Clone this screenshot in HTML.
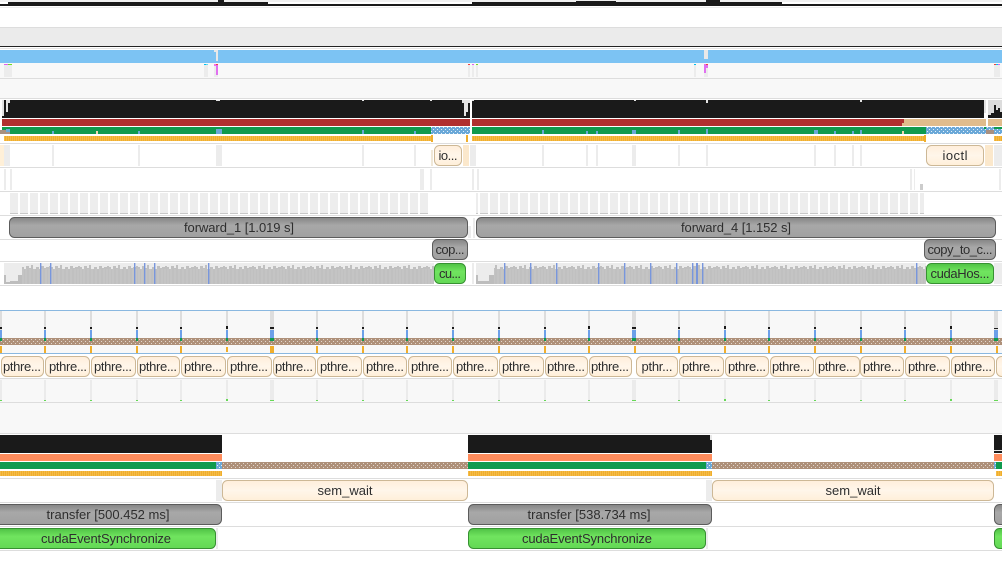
<!DOCTYPE html>
<html><head><meta charset="utf-8"><style>
html,body{margin:0;padding:0;background:#fff;width:1002px;height:564px;overflow:hidden}
svg{display:block}
text{font-family:"Liberation Sans",sans-serif;font-size:13px;fill:#2e2e2e;text-anchor:middle}
.g{fill:#ececec}.l{fill:#ddd}.k{fill:#1a1a1a}.b{fill:#6c9fe8}.c{fill:#0f9a4e}.o{fill:#f0ae2c}
.cr{fill:url(#cream);stroke:#cdb896;stroke-width:1}
.gr{fill:url(#gray);stroke:#5c5c5c;stroke-width:1}
.gn{fill:url(#green);stroke:#379132;stroke-width:1}
</style></head><body>
<svg width="1002" height="564" viewBox="0 0 1002 564" xmlns="http://www.w3.org/2000/svg">
<defs>
<linearGradient id="cream" x1="0" y1="0" x2="0" y2="1"><stop offset="0" stop-color="#ffeedb"/><stop offset=".5" stop-color="#fff6ea"/><stop offset="1" stop-color="#ffefd9"/></linearGradient>
<linearGradient id="gray" x1="0" y1="0" x2="0" y2="1"><stop offset="0" stop-color="#858585"/><stop offset=".4" stop-color="#a8a8a8"/><stop offset="1" stop-color="#a0a0a0"/></linearGradient>
<linearGradient id="green" x1="0" y1="0" x2="0" y2="1"><stop offset="0" stop-color="#4fc245"/><stop offset=".4" stop-color="#70e45f"/><stop offset="1" stop-color="#63d855"/></linearGradient>
<pattern id="stripe" width="2" height="6" patternUnits="userSpaceOnUse"><rect width="2" height="6" fill="#f0ae2c"/><rect width="1" height="6" fill="#f4bb48"/></pattern>
<pattern id="brown" width="4" height="4" patternUnits="userSpaceOnUse"><rect width="4" height="4" fill="#ae9079"/><rect x="1" y="1" width="1" height="1" fill="#e2d6cc"/><rect x="3" y="3" width="1" height="1" fill="#e2d6cc"/></pattern>
<pattern id="dots" width="4" height="4" patternUnits="userSpaceOnUse"><rect width="4" height="4" fill="#6aa8d8"/><rect x="1" y="1" width="1" height="1" fill="#e6f0f8"/><rect x="3" y="3" width="1" height="1" fill="#e6f0f8"/></pattern>
<pattern id="blocks" x="10" y="193" width="10" height="21" patternUnits="userSpaceOnUse"><rect width="8" height="21" fill="#ededed"/><rect y="20" width="8" height="1" fill="#c8c8c8"/></pattern>
<pattern id="wave" x="22" y="263" width="29" height="21" patternUnits="userSpaceOnUse">
<rect width="29" height="21" fill="#ececec"/>
<path d="M0 21V4h2V6h2V3h3V5h2V2h2V6h3V4h3V6h2V3h3V5h2V4h3V3h2V21z" fill="#c0c0c0"/>
<path d="M1 21V6M4 21V6M8 21V6M12 21V6M16 21V6M20 21V6M24 21V6M27 21V6" stroke="#d0d0d0" stroke-width=".6"/>
</pattern>
</defs>

<!-- top strip -->
<rect x="0" y="0" width="1002" height="2" fill="#f0f0f0"/>
<rect x="0" y="4" width="1002" height="2" class="k"/>
<rect x="8" y="2" width="260" height="3" class="k"/>
<rect x="218" y="0" width="6" height="4" class="k"/>
<rect x="472" y="2" width="310" height="3" class="k"/>
<rect x="576" y="1" width="40" height="3" class="k"/>
<rect x="706" y="0" width="14" height="4" class="k"/>
<rect x="0" y="7" width="1002" height="1" fill="#eee"/>
<rect x="0" y="27" width="1002" height="1" class="l"/>
<rect x="0" y="28" width="1002" height="18" fill="#ebebeb"/>
<rect x="0" y="46" width="1002" height="1" fill="#222"/>
<rect x="0" y="48" width="1002" height="1" fill="#e4e4e4"/>

<!-- blue band & light rows -->
<rect x="0" y="50" width="1002" height="13" fill="#7cc3f3"/>
<rect x="214" y="50" width="4" height="2" fill="#e8e8e8"/><rect x="216" y="50" width="2" height="11" fill="#e8e8e8"/>
<rect x="704" y="50" width="4" height="9" fill="#e8e8e8"/><rect x="706" y="50" width="2" height="5" fill="#e8e8e8"/>
<rect x="0" y="63" width="1002" height="15" fill="#f8f8f8"/>
<rect x="0" y="78" width="1002" height="1" class="l"/>
<rect x="0" y="79" width="1002" height="19" fill="#f8f8f8"/>
<rect x="0" y="98" width="1002" height="1" class="l"/>
<rect x="4" y="64" width="8" height="13" class="g"/><rect x="4" y="64" width="4" height="1" fill="#e060f0"/><rect x="8" y="64" width="4" height="1" fill="#70e020"/>
<rect x="204" y="64" width="4" height="13" class="g"/><rect x="204" y="64" width="2" height="1" fill="#00c0f0"/><rect x="206" y="64" width="2" height="1" fill="#60d8f0"/>
<rect x="214" y="64" width="4" height="13" class="g"/><rect x="216" y="64" width="2" height="11" fill="#e070f0"/><rect x="214" y="64" width="2" height="2" fill="#f070f0"/><rect x="216" y="64" width="2" height="1" fill="#f04040"/>
<rect x="468" y="64" width="2" height="13" class="g"/><rect x="468" y="64" width="2" height="1" fill="#f04040"/>
<rect x="472" y="64" width="2" height="13" class="g"/><rect x="472" y="64" width="2" height="1" fill="#e060f0"/>
<rect x="476" y="64" width="2" height="13" class="g"/><rect x="476" y="64" width="2" height="1" fill="#70e020"/>
<rect x="694" y="64" width="2" height="13" class="g"/><rect x="694" y="64" width="2" height="1" fill="#00c0f0"/>
<rect x="704" y="64" width="4" height="13" class="g"/><rect x="704" y="64" width="2" height="9" fill="#e070f0"/><rect x="704" y="64" width="4" height="4" fill="#e070f0"/><rect x="706" y="64" width="2" height="1" fill="#f04040"/>
<rect x="994" y="64" width="6" height="13" class="g"/><rect x="994" y="64" width="2" height="1" fill="#f04040"/><rect x="996" y="64" width="2" height="1" fill="#00c0f0"/><rect x="998" y="64" width="2" height="1" fill="#e060f0"/>

<!-- main thread stack -->
<rect x="2" y="100" width="468" height="18" class="k"/>
<rect x="472" y="100" width="512" height="18" class="k"/>
<rect x="2" y="100" width="2" height="16" fill="#e4e4e4"/><rect x="6" y="100" width="4" height="3" fill="#e4e4e4"/><rect x="6" y="100" width="2" height="12" fill="#e4e4e4"/>
<rect x="216" y="100" width="4" height="1" fill="#e4e4e4"/><rect x="362" y="100" width="2" height="1" fill="#e4e4e4"/><rect x="430" y="100" width="2" height="1" fill="#e4e4e4"/>
<rect x="462" y="100" width="8" height="3" fill="#e4e4e4"/><rect x="464" y="100" width="4" height="12" fill="#e4e4e4"/><rect x="464" y="100" width="2" height="16" fill="#e4e4e4"/>
<rect x="472" y="100" width="2" height="1" fill="#e4e4e4"/><rect x="634" y="100" width="2" height="1" fill="#e4e4e4"/>
<rect x="706" y="100" width="2" height="3" fill="#e4e4e4"/><rect x="860" y="100" width="2" height="2" fill="#e4e4e4"/><rect x="984" y="100" width="2" height="13" fill="#e4e4e4"/>
<rect x="988" y="100" width="14" height="18" fill="#dcdcdc"/>
<path d="M988 118V115h3V113h3V105h2V110h2V108h2V112h2V118z" class="k"/>

<rect x="2" y="119" width="468" height="7" fill="#b03030"/>
<rect x="472" y="119" width="432" height="7" fill="#b03030"/>
<rect x="904" y="119" width="82" height="7" fill="#e0bc8c"/><rect x="902" y="123" width="2" height="3" fill="#e0bc8c"/>
<rect x="988" y="119" width="14" height="7" fill="#e0bc8c"/>

<rect x="2" y="127" width="429" height="7" class="c"/>
<rect x="0" y="130" width="10" height="4" fill="#a89080"/><rect x="6" y="129" width="4" height="3" fill="#6aa8d8"/>
<rect x="52" y="131" width="2" height="3" fill="#6aa8d8"/><rect x="96" y="131" width="2" height="3" fill="#f0d8b0"/><rect x="138" y="131" width="2" height="3" fill="#6aa8d8"/><rect x="216" y="129" width="6" height="5" fill="#6aa8d8"/>
<rect x="362" y="130" width="2" height="4" fill="#6aa8d8"/><rect x="414" y="131" width="2" height="3" fill="#6aa8d8"/>
<rect x="431" y="127" width="39" height="7" fill="url(#dots)"/>
<rect x="472" y="127" width="454" height="7" class="c"/>
<rect x="542" y="130" width="2" height="4" fill="#6aa8d8"/><rect x="586" y="131" width="2" height="3" fill="#6aa8d8"/><rect x="596" y="131" width="2" height="3" fill="#6aa8d8"/><rect x="632" y="130" width="4" height="4" fill="#6aa8d8"/>
<rect x="678" y="130" width="2" height="4" fill="#6aa8d8"/><rect x="706" y="129" width="2" height="5" fill="#6aa8d8"/><rect x="814" y="130" width="4" height="4" fill="#6aa8d8"/><rect x="834" y="131" width="2" height="3" fill="#6aa8d8"/>
<rect x="852" y="131" width="2" height="3" fill="#6aa8d8"/><rect x="860" y="130" width="2" height="4" fill="#6aa8d8"/><rect x="902" y="131" width="2" height="3" fill="#f0d8b0"/>
<rect x="926" y="127" width="76" height="7" fill="url(#dots)"/>
<rect x="984" y="127" width="2" height="2" class="c"/><rect x="994" y="127" width="8" height="2" class="c"/><rect x="986" y="130" width="8" height="4" fill="#a89080"/>

<rect x="4" y="136" width="428" height="5" fill="url(#stripe)"/><rect x="431" y="135" width="2" height="7" class="o"/>
<rect x="466" y="135" width="2" height="7" class="o"/>
<rect x="472" y="136" width="453" height="5" fill="url(#stripe)"/><rect x="924" y="135" width="2" height="7" class="o"/>
<rect x="994" y="136" width="8" height="5" fill="url(#stripe)"/>

<rect x="0" y="143" width="1002" height="1" class="l"/>
<rect x="0" y="167" width="1002" height="1" class="l"/>
<rect x="0" y="191" width="1002" height="1" class="l"/>
<rect x="0" y="215" width="1002" height="1" class="l"/>
<rect x="0" y="239" width="1002" height="1" class="l"/>
<rect x="0" y="261" width="1002" height="1" class="l"/>
<rect x="0" y="285" width="1002" height="1" class="l"/>

<!-- row 144-166 ticks -->
<rect x="0" y="145" width="4" height="21" fill="#fff0d8"/><rect x="4" y="145" width="6" height="21" class="g"/>
<rect x="52" y="145" width="2" height="21" class="g"/><rect x="138" y="145" width="2" height="21" class="g"/><rect x="216" y="145" width="6" height="21" class="g"/>
<rect x="362" y="145" width="2" height="21" class="g"/><rect x="414" y="145" width="2" height="21" class="g"/>
<rect x="431" y="150" width="2" height="16" fill="#f0e8d8"/>
<rect x="463" y="145" width="6" height="21" fill="#fbe8cc"/><rect x="470" y="145" width="2" height="21" class="g"/><rect x="472" y="145" width="4" height="21" class="g"/>
<rect x="542" y="145" width="2" height="21" class="g"/><rect x="586" y="145" width="2" height="21" class="g"/><rect x="596" y="145" width="2" height="21" class="g"/><rect x="632" y="145" width="4" height="21" class="g"/>
<rect x="678" y="145" width="2" height="21" class="g"/><rect x="706" y="145" width="2" height="21" class="g"/><rect x="814" y="145" width="2" height="21" class="g"/><rect x="834" y="145" width="2" height="21" class="g"/>
<rect x="852" y="145" width="2" height="21" class="g"/><rect x="860" y="145" width="2" height="21" class="g"/>
<rect x="985" y="145" width="8" height="21" fill="#fbe8cc"/><rect x="994" y="145" width="8" height="21" class="g"/>
<rect x="434.5" y="145.5" width="27" height="20" rx="5" class="cr"/><text x="448" y="160" textLength="19">io...</text>
<rect x="926.5" y="145.5" width="57" height="20" rx="5" class="cr"/><text x="955" y="160" textLength="25">ioctl</text>

<!-- row 168-191 ticks -->
<rect x="4" y="169" width="2" height="21" class="g"/><rect x="10" y="169" width="2" height="21" class="g"/>
<rect x="420" y="169" width="4" height="21" class="g"/><rect x="430" y="169" width="2" height="21" class="g"/>
<rect x="472" y="169" width="2" height="21" class="g"/><rect x="477" y="169" width="2" height="21" class="g"/>
<rect x="910" y="169" width="2" height="21" class="g"/><rect x="914" y="169" width="1" height="21" class="g"/><rect x="920" y="184" width="3" height="6" fill="#ccc"/><rect x="999" y="169" width="2" height="21" class="g"/>

<!-- row 192-215 -->
<rect x="10" y="193" width="420" height="21" fill="url(#blocks)"/>
<rect x="476" y="193" width="448" height="21" fill="url(#blocks)"/>

<!-- forward -->
<rect x="468" y="226" width="3" height="12" class="g"/><rect x="473" y="218" width="2" height="20" class="g"/>
<rect x="9.5" y="217.5" width="458" height="20" rx="5" class="gr"/><text x="239" y="232" textLength="110">forward_1 [1.019 s]</text>
<rect x="476.5" y="217.5" width="519" height="20" rx="5" class="gr"/><text x="736" y="232" textLength="110">forward_4 [1.152 s]</text>
<rect x="432.5" y="239.5" width="35" height="20" rx="5" class="gr"/><text x="450" y="254" textLength="29">cop...</text>
<rect x="924.5" y="239.5" width="71" height="20" rx="5" class="gr"/><text x="960" y="254" textLength="65">copy_to_c...</text>

<!-- waveform -->
<rect x="4" y="263" width="430" height="21" fill="url(#wave)"/>
<rect x="4" y="263" width="18" height="21" fill="#ececec"/><path d="M4 284V275h2V282h4V281h8V275h4V284z" fill="#bdbdbd"/>
<rect x="472" y="263" width="2" height="21" class="g"/>
<rect x="478" y="263" width="448" height="21" fill="url(#wave)"/>
<rect x="476" y="263" width="18" height="21" fill="#ececec"/><path d="M476 284V275h2V281h8V281h3V275h5V284z" fill="#bdbdbd"/>
<rect x="994" y="263" width="8" height="21" class="g"/>
<g fill="#7896dc">
<rect x="40" y="263" width="1.4" height="21"/><rect x="50" y="263" width="1.4" height="21"/><rect x="134" y="263" width="1.4" height="21"/><rect x="144" y="263" width="1.4" height="21"/><rect x="154" y="263" width="1.4" height="21"/><rect x="208" y="263" width="1.4" height="21"/>
<rect x="504" y="263" width="1.4" height="21"/><rect x="530" y="263" width="1.4" height="21"/><rect x="556" y="263" width="1.4" height="21"/><rect x="598" y="263" width="1.4" height="21"/><rect x="624" y="263" width="1.4" height="21"/><rect x="650" y="263" width="1.4" height="21"/>
<rect x="676" y="263" width="1.4" height="21"/><rect x="692" y="263" width="1.4" height="21"/><rect x="696" y="263" width="2" height="21"/><rect x="702" y="263" width="1.4" height="21"/><rect x="916" y="263" width="1.4" height="21"/>
</g>
<rect x="434.5" y="263.5" width="31" height="20" rx="5" class="gn"/><text x="450" y="278" textLength="22">cu...</text>
<rect x="926.5" y="263.5" width="67" height="20" rx="5" class="gn"/><text x="960" y="278" textLength="59">cudaHos...</text>

<!-- worker section -->
<rect x="0" y="310" width="1002" height="1" fill="#8ab8e0"/>
<rect x="0" y="311" width="1002" height="42" fill="#f8f8f8"/>
<rect x="0" y="353" width="1002" height="1" fill="#8ab8e0"/>
<g id="ticks">
<rect x="0" y="311" width="2" height="27" class="l"/><rect x="44" y="311" width="2" height="27" class="l"/><rect x="90" y="311" width="2" height="27" class="l"/><rect x="136" y="311" width="2" height="27" class="l"/><rect x="180" y="311" width="2" height="27" class="l"/><rect x="226" y="311" width="2" height="27" class="l"/><rect x="270" y="311" width="4" height="27" class="l"/><rect x="316" y="311" width="2" height="27" class="l"/><rect x="362" y="311" width="2" height="27" class="l"/><rect x="406" y="311" width="2" height="27" class="l"/><rect x="452" y="311" width="2" height="27" class="l"/><rect x="498" y="311" width="2" height="27" class="l"/><rect x="544" y="311" width="2" height="27" class="l"/><rect x="588" y="311" width="2" height="27" class="l"/><rect x="632" y="311" width="4" height="27" class="l"/><rect x="678" y="311" width="2" height="27" class="l"/><rect x="724" y="311" width="2" height="27" class="l"/><rect x="768" y="311" width="2" height="27" class="l"/><rect x="814" y="311" width="2" height="27" class="l"/><rect x="860" y="311" width="2" height="27" class="l"/><rect x="904" y="311" width="2" height="27" class="l"/><rect x="950" y="311" width="2" height="27" class="l"/><rect x="994" y="311" width="4" height="27" class="l"/>
</g>
<path d="M0 327h2v2H0zM44 327h2v2h-2zM90 327h2v2h-2zM136 327h2v2h-2zM180 327h2v2h-2zM226 326h2v3h-2zM270 327h4v2h-4zM316 327h2v2h-2zM362 327h2v2h-2zM406 327h2v2h-2zM452 327h2v2h-2zM498 327h2v2h-2zM544 327h2v2h-2zM588 326h2v3h-2zM632 327h4v2h-4zM678 327h2v2h-2zM724 326h2v3h-2zM768 327h2v2h-2zM814 327h2v2h-2zM860 327h2v2h-2zM904 327h2v2h-2zM950 326h2v3h-2zM994 328h4v1h-4z" class="k"/>
<path d="M0 330h2v8H0zM44 330h2v8h-2zM90 330h2v8h-2zM136 330h2v8h-2zM180 330h2v8h-2zM226 330h2v8h-2zM270 330h4v8h-4zM316 330h2v8h-2zM362 330h2v8h-2zM406 330h2v8h-2zM452 330h2v8h-2zM498 330h2v8h-2zM544 330h2v8h-2zM588 330h2v8h-2zM632 330h4v8h-4zM678 330h2v8h-2zM724 330h2v8h-2zM768 330h2v8h-2zM814 330h2v8h-2zM860 330h2v8h-2zM904 330h2v8h-2zM950 330h2v8h-2zM994 330h4v8h-4z" class="b"/>
<rect x="0" y="338" width="1002" height="7" fill="url(#brown)"/>
<path d="M0 338h2v3H0zM44 338h2v3h-2zM90 338h2v3h-2zM136 338h2v3h-2zM180 338h2v3h-2zM226 338h2v3h-2zM270 338h4v3h-4zM316 338h2v3h-2zM362 338h2v3h-2zM406 338h2v3h-2zM452 338h2v3h-2zM498 338h2v3h-2zM544 338h2v3h-2zM588 338h2v3h-2zM632 338h4v3h-4zM678 338h2v3h-2zM724 338h2v3h-2zM768 338h2v3h-2zM814 338h2v3h-2zM860 338h2v3h-2zM904 338h2v3h-2zM950 338h2v3h-2zM994 338h4v3h-4z" class="c"/>
<path d="M0 346h2v7H0zM44 346h2v7h-2zM90 346h2v7h-2zM136 346h2v7h-2zM180 346h2v7h-2zM226 347h2v5h-2zM270 346h4v7h-4zM316 346h2v7h-2zM362 346h2v7h-2zM406 346h2v7h-2zM452 346h2v7h-2zM498 346h2v7h-2zM544 346h2v7h-2zM588 346h2v7h-2zM634 346h2v7h-2zM678 346h2v7h-2zM724 346h2v7h-2zM768 346h2v7h-2zM814 346h2v7h-2zM860 346h2v7h-2zM904 346h2v7h-2zM950 346h2v7h-2zM996 346h2v7h-2z" class="o"/>

<!-- pthread chips -->
<g class="cr">
<rect x="1.5" y="356.5" width="42" height="20" rx="5"/><rect x="45.5" y="356.5" width="44" height="20" rx="5"/><rect x="91.5" y="356.5" width="44" height="20" rx="5"/><rect x="137.5" y="356.5" width="42" height="20" rx="5"/><rect x="181.5" y="356.5" width="44" height="20" rx="5"/><rect x="227.5" y="356.5" width="44" height="20" rx="5"/><rect x="273.5" y="356.5" width="42" height="20" rx="5"/><rect x="317.5" y="356.5" width="44" height="20" rx="5"/><rect x="363.5" y="356.5" width="43" height="20" rx="5"/><rect x="408.5" y="356.5" width="43" height="20" rx="5"/><rect x="453.5" y="356.5" width="44" height="20" rx="5"/><rect x="499.5" y="356.5" width="44" height="20" rx="5"/><rect x="545.5" y="356.5" width="42" height="20" rx="5"/><rect x="589.5" y="356.5" width="42" height="20" rx="5"/><rect x="636.5" y="356.5" width="41" height="20" rx="5"/><rect x="679.5" y="356.5" width="44" height="20" rx="5"/><rect x="725.5" y="356.5" width="43" height="20" rx="5"/><rect x="770.5" y="356.5" width="43" height="20" rx="5"/><rect x="815.5" y="356.5" width="44" height="20" rx="5"/><rect x="860.5" y="356.5" width="43" height="20" rx="5"/><rect x="905.5" y="356.5" width="44" height="20" rx="5"/><rect x="951.5" y="356.5" width="43" height="20" rx="5"/><rect x="996.5" y="356.5" width="12" height="20" rx="5"/>
</g>
<g>
<text x="22" y="371" textLength="38">pthre...</text><text x="68" y="371" textLength="38">pthre...</text><text x="113" y="371" textLength="38">pthre...</text><text x="158" y="371" textLength="38">pthre...</text><text x="203" y="371" textLength="38">pthre...</text><text x="249" y="371" textLength="38">pthre...</text><text x="294" y="371" textLength="38">pthre...</text><text x="339" y="371" textLength="38">pthre...</text><text x="385" y="371" textLength="38">pthre...</text><text x="430" y="371" textLength="38">pthre...</text><text x="475" y="371" textLength="38">pthre...</text><text x="521" y="371" textLength="38">pthre...</text><text x="566" y="371" textLength="38">pthre...</text><text x="610" y="371" textLength="38">pthre...</text><text x="657" y="371" textLength="31">pthr...</text><text x="701" y="371" textLength="38">pthre...</text><text x="747" y="371" textLength="38">pthre...</text><text x="791" y="371" textLength="38">pthre...</text><text x="837" y="371" textLength="38">pthre...</text><text x="882" y="371" textLength="38">pthre...</text><text x="927" y="371" textLength="38">pthre...</text><text x="973" y="371" textLength="38">pthre...</text>
</g>
<rect x="0" y="378" width="1002" height="1" class="l"/>
<rect x="0" y="379" width="1002" height="23" fill="#f8f8f8"/>
<path d="M0 380h2v20H0zM44 380h2v20h-2zM90 380h2v20h-2zM136 380h2v20h-2zM180 380h2v20h-2zM226 380h2v20h-2zM270 380h4v20h-4zM316 380h2v20h-2zM362 380h2v20h-2zM406 380h2v20h-2zM452 380h2v20h-2zM498 380h2v20h-2zM544 380h2v20h-2zM588 380h2v20h-2zM632 380h4v20h-4zM678 380h2v20h-2zM724 380h2v20h-2zM768 380h2v20h-2zM814 380h2v20h-2zM860 380h2v20h-2zM904 380h2v20h-2zM950 380h2v20h-2zM994 380h4v20h-4z" fill="#ebebeb"/>
<path d="M0 400h2v1H0zM44 400h2v1h-2zM90 400h2v1h-2zM136 400h2v1h-2zM180 400h2v1h-2zM226 399h2v2h-2zM270 400h4v1h-4zM316 400h2v1h-2zM362 400h2v1h-2zM406 400h2v1h-2zM452 400h2v1h-2zM498 400h2v1h-2zM544 400h2v1h-2zM588 400h2v1h-2zM632 400h4v1h-4zM678 400h2v1h-2zM724 399h2v2h-2zM768 400h2v1h-2zM814 400h2v1h-2zM860 400h2v1h-2zM904 400h2v1h-2zM950 399h2v2h-2zM994 400h4v1h-4z" fill="#66d856"/>
<rect x="0" y="402" width="1002" height="1" class="l"/>
<rect x="0" y="403" width="1002" height="30" fill="#f8f8f8"/>
<rect x="0" y="433" width="1002" height="1" class="l"/>

<!-- bottom thread -->
<rect x="0" y="435" width="222" height="18" class="k"/><rect x="468" y="435" width="244" height="18" class="k"/><rect x="994" y="435" width="8" height="18" class="k"/>
<rect x="710" y="435" width="2" height="5" fill="#e8e8e8"/><rect x="994" y="450" width="8" height="1" fill="#e8e8e8"/>
<rect x="0" y="454" width="222" height="7" fill="#ff8c5c"/><rect x="468" y="454" width="244" height="7" fill="#ff8c5c"/><rect x="994" y="454" width="8" height="7" fill="#ff8c5c"/>
<rect x="0" y="462" width="216" height="7" class="c"/><rect x="216" y="462" width="6" height="7" fill="url(#dots)"/><rect x="222" y="462" width="246" height="7" fill="url(#brown)"/>
<rect x="468" y="462" width="238" height="7" class="c"/><rect x="706" y="462" width="6" height="7" fill="url(#dots)"/><rect x="712" y="462" width="282" height="7" fill="url(#brown)"/><rect x="994" y="462" width="2" height="7" fill="url(#dots)"/><rect x="996" y="462" width="6" height="7" class="c"/>
<rect x="0" y="471" width="222" height="5" fill="url(#stripe)"/><rect x="468" y="471" width="244" height="5" fill="url(#stripe)"/><rect x="996" y="471" width="6" height="5" fill="url(#stripe)"/>
<rect x="0" y="478" width="1002" height="1" class="l"/>
<rect x="0" y="502" width="1002" height="1" class="l"/>
<rect x="0" y="526" width="1002" height="1" class="l"/>
<rect x="0" y="550" width="1002" height="1" class="l"/>
<rect x="216" y="480" width="6" height="21" class="g"/><rect x="706" y="480" width="6" height="21" class="g"/>
<rect x="222.5" y="480.5" width="245" height="20" rx="5" class="cr"/><text x="345" y="495" textLength="55">sem_wait</text>
<rect x="712.5" y="480.5" width="281" height="20" rx="5" class="cr"/><text x="853" y="495" textLength="55">sem_wait</text>
<rect x="-5.5" y="504.5" width="227" height="20" rx="5" class="gr"/><text x="108" y="519" textLength="123">transfer [500.452 ms]</text>
<rect x="468.5" y="504.5" width="243" height="20" rx="5" class="gr"/><text x="589" y="519" textLength="123">transfer [538.734 ms]</text>
<rect x="994.5" y="504.5" width="20" height="20" rx="5" class="gr"/>
<rect x="216" y="528" width="2" height="21" class="g"/><rect x="706" y="528" width="2" height="21" class="g"/>
<rect x="-5.5" y="528.5" width="221" height="20" rx="5" class="gn"/><text x="106" y="543" textLength="130">cudaEventSynchronize</text>
<rect x="468.5" y="528.5" width="237" height="20" rx="5" class="gn"/><text x="587" y="543" textLength="130">cudaEventSynchronize</text>
<rect x="994.5" y="528.5" width="20" height="20" rx="5" class="gn"/>
</svg>
</body></html>
